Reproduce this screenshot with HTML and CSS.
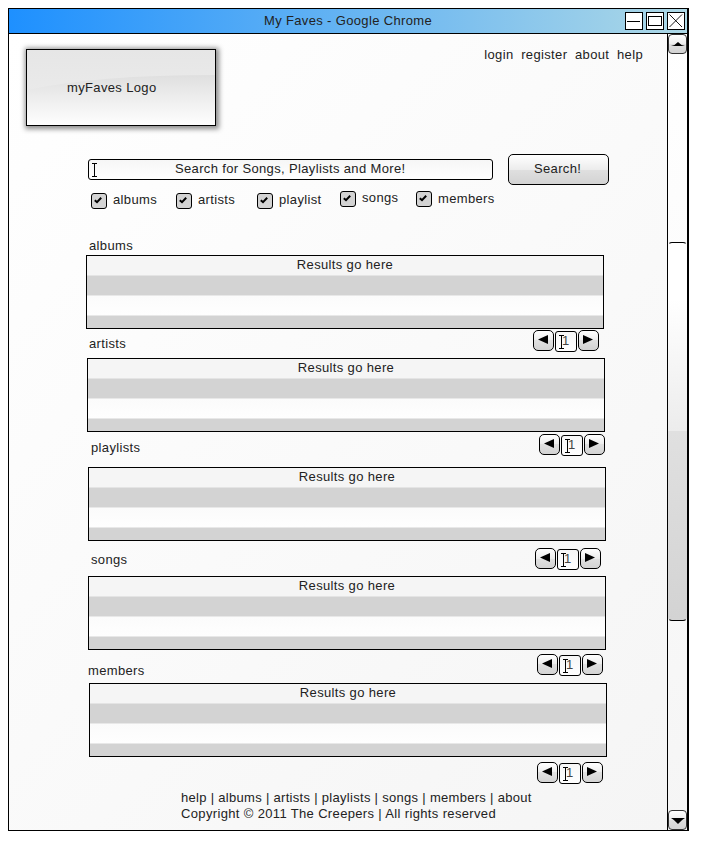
FILE: index.html
```html
<!DOCTYPE html>
<html lang="en">
<head>
<meta charset="utf-8">
<title>My Faves</title>
<link rel="stylesheet" href="styles.css">
</head>
<body>
<svg class="defs" width="0" height="0" aria-hidden="true">
  <symbol id="check" viewBox="0 0 8 7"><path d="M.8 3.2L3 5.2L7.2 .8" fill="none" stroke="#000" stroke-width="2"/></symbol>
  <symbol id="left" viewBox="0 0 10 9"><path d="M10 0V9L0 4.5Z"/></symbol>
  <symbol id="right" viewBox="0 0 10 9"><path d="M0 0V9L10 4.5Z"/></symbol>
  <symbol id="caret" viewBox="0 0 5 14"><path d="M0 .5H5M2.5 1V13M0 13.5H5" fill="none" stroke="#000"/></symbol>
</svg>
<div class="window">
  <header class="titlebar">
    <div class="title">My Faves - Google Chrome</div>
    <div class="controls">
      <svg width="18" height="18"><rect x=".5" y=".5" width="17" height="17" fill="#fff" stroke="#000"/><path d="M2 9.5H15" stroke="#000"/></svg>
      <svg width="18" height="18"><rect x=".5" y=".5" width="17" height="17" fill="#fff" stroke="#000"/><rect x="2.5" y="4.5" width="13" height="9" fill="none" stroke="#000"/></svg>
      <svg width="18" height="18"><rect x=".5" y=".5" width="17" height="17" fill="#fff" stroke="#000"/><path d="M2.5 2.5L15 15M15 2.5L2.5 15" stroke="#000" stroke-width=".9"/></svg>
    </div>
  </header>
  <div class="body">
    <main class="page">
      <div class="top">
        <div class="logo">
          <svg class="gloss" width="188" height="75" viewBox="0 0 188 75"><defs><linearGradient id="shade" x1="0" y1="0" x2="0" y2="1"><stop offset="0" stop-color="#dfdfdf"/><stop offset="1" stop-color="#fefefe"/></linearGradient></defs><path d="M0 40Q70 25 188 25V75H0Z" fill="url(#shade)"/></svg>
          <span>myFaves Logo</span>
        </div>
        <nav class="nav"><a>login</a><a>register</a><a>about</a><a>help</a></nav>
      </div>
      <div class="search">
        <div class="query"><svg class="caret" width="5" height="14"><use href="#caret"/></svg><span>Search for Songs, Playlists and More!</span></div>
        <div class="go">Search!</div>
      </div>
      <div class="filters">
        <div class="filter albums"><i><svg width="8" height="7"><use href="#check"/></svg></i><span>albums</span></div>
        <div class="filter artists"><i><svg width="8" height="7"><use href="#check"/></svg></i><span>artists</span></div>
        <div class="filter playlist"><i><svg width="8" height="7"><use href="#check"/></svg></i><span>playlist</span></div>
        <div class="filter songs"><i><svg width="8" height="7"><use href="#check"/></svg></i><span>songs</span></div>
        <div class="filter members"><i><svg width="8" height="7"><use href="#check"/></svg></i><span>members</span></div>
      </div>
      <div class="strip s0"><h2>albums</h2></div>
      <div class="results r1">Results go here</div>
      <div class="strip s1"><h2>artists</h2>
        <div class="pager"><b><svg width="10" height="9"><use href="#left"/></svg></b><div class="num"><svg width="5" height="14"><use href="#caret"/></svg><span>1</span></div><b><svg width="10" height="9"><use href="#right"/></svg></b></div></div>
      <div class="results r2">Results go here</div>
      <div class="strip s2"><h2>playlists</h2>
        <div class="pager"><b><svg width="10" height="9"><use href="#left"/></svg></b><div class="num"><svg width="5" height="14"><use href="#caret"/></svg><span>1</span></div><b><svg width="10" height="9"><use href="#right"/></svg></b></div></div>
      <div class="results r3">Results go here</div>
      <div class="strip s3"><h2>songs</h2>
        <div class="pager"><b><svg width="10" height="9"><use href="#left"/></svg></b><div class="num"><svg width="5" height="14"><use href="#caret"/></svg><span>1</span></div><b><svg width="10" height="9"><use href="#right"/></svg></b></div></div>
      <div class="results r3">Results go here</div>
      <div class="strip s4"><h2>members</h2>
        <div class="pager"><b><svg width="10" height="9"><use href="#left"/></svg></b><div class="num"><svg width="5" height="14"><use href="#caret"/></svg><span>1</span></div><b><svg width="10" height="9"><use href="#right"/></svg></b></div></div>
      <div class="results r5">Results go here</div>
      <div class="strip s5">
        <div class="pager"><b><svg width="10" height="9"><use href="#left"/></svg></b><div class="num"><svg width="5" height="14"><use href="#caret"/></svg><span>1</span></div><b><svg width="10" height="9"><use href="#right"/></svg></b></div></div>
      <footer><div class="links">help | albums | artists | playlists | songs | members | about</div><div>Copyright © 2011 The Creepers | All rights reserved</div></footer>
    </main>
    <aside class="scroll">
      <div class="arrow up"><svg width="14" height="4"><path d="M0 4Q4 3.5 7 0Q10 3.5 14 4Z"/></svg></div>
      <div class="thumb"></div>
      <div class="arrow down"><svg width="14" height="6"><path d="M0 0H14Q11 1.5 7 6Q3 1.5 0 0Z"/></svg></div>
    </aside>
  </div>
</div>
</body>
</html>
```

FILE: styles.css
```css
* { box-sizing: border-box; }
body {
  margin: 0;
  padding: 8px;
  background: #fff;
  font: 13px/16px "Liberation Sans", Arial, sans-serif;
  letter-spacing: .35px;
  color: #222;
}
svg { display: block; flex: none; }
.defs { position: absolute; }
.window {
  width: 681px;
  height: 823px;
  border: 1px solid #000;
  border-right-width: 2px;
  display: flex;
  flex-direction: column;
}
.titlebar {
  height: 25px;
  flex: none;
  border-bottom: 1px solid #000;
  background: linear-gradient(90deg, #1e90ff, #add8e6);
  display: flex;
  padding: 3px 2px 0 0;
}
.title { margin: 1px auto 0 255px; white-space: nowrap; }
.controls { display: flex; gap: 3px; }
.body { flex: 1; display: flex; min-height: 0; }
.page {
  flex: 1;
  min-width: 0;
  background: linear-gradient(135deg, #fff, #f5f5f5);
  display: flex;
  flex-direction: column;
}
.top { display: flex; height: 120px; padding: 15px 24px 0 17px; flex: none; }
.logo {
  position: relative;
  width: 190px;
  height: 77px;
  border: 1px solid #000;
  background: linear-gradient(#e6e6e6, #ededed);
  box-shadow: 1px 1px 5px 2px rgba(0, 0, 0, .45);
  padding: 30px 0 0 40px;
}
.gloss { position: absolute; left: 0; top: 0; }
.logo span { position: relative; }
.nav { margin-left: auto; display: flex; gap: 7.7px; margin-top: -2px; }
.search { display: flex; height: 31px; padding-left: 79px; flex: none; }
.query {
  width: 405px;
  height: 21px;
  margin: 5px 15px 0 0;
  border: 1px solid #000;
  border-radius: 3px;
  background: linear-gradient(#f6f6f6, #fff);
  display: flex;
  padding: 1px 0 0 3px;
}
.caret { margin-top: 2px; }
.query span { margin-left: 78px; white-space: nowrap; }
.go {
  width: 101px;
  height: 31px;
  border: 1px solid #000;
  border-radius: 5px;
  background: linear-gradient(#fff, #ececec 50%, #e0e0e0 50%, #d3d3d3);
  padding: 6px 0 0 25px;
}
.filters { display: flex; height: 53px; padding: 6px 0 0 82px; flex: none; }
.filter { display: flex; gap: 6px; width: 85px; }
.filter i {
  width: 16px;
  height: 16px;
  margin-top: 2px;
  border: 1px solid #000;
  border-radius: 3px;
  background: #d3d3d3;
  padding: 3px 0 0 2px;
}
.filter span { margin-top: 1px; }
.artists { width: 81px; }
.playlist { width: 83px; }
.songs { width: 76px; }
.songs i, .members i { margin-top: 0; }
.songs span { margin-top: -1px; }
.members span { margin-top: 0; }
.strip { display: flex; align-items: flex-start; flex: none; }
h2 { margin: 0; font: inherit; width: 100px; }
.s0 { height: 17px; padding-left: 80px; }
.s1 { height: 29px; padding-left: 80px; }
.s1 h2 { margin-top: 7px; }
.s1 .pager { margin: 1px 0 0 344px; }
.s2 { height: 35px; padding-left: 82px; }
.s2 h2 { margin-top: 8px; }
.s2 .pager { margin: 2px 0 0 348px; }
.s3 { height: 35px; padding-left: 82px; }
.s3 h2 { margin-top: 11px; }
.s3 .pager { margin: 7px 0 0 344px; }
.s4 { height: 33px; padding-left: 79px; }
.s4 h2 { margin-top: 13px; }
.s4 .pager { margin: 4px 0 0 349px; }
.s5 { height: 33px; }
.s5 .pager { margin: 5px 0 0 528px; }
.results {
  width: 518px;
  height: 74px;
  flex: none;
  border: 1px solid #000;
  background: linear-gradient(#f5f5f5 19px, #e4e4e4 19px 20px, #d3d3d3 20px 39px, #e8e8e8 39px 40px, #fbfbfb 40px, #fefefe 59px, #e8e8e8 59px 60px, #d3d3d3 60px);
  text-align: center;
  padding-top: 1px;
}
.r1 { margin-left: 77px; }
.r2 { margin-left: 78px; }
.r3 { margin-left: 79px; }
.r5 { margin-left: 80px; }
.pager { display: flex; gap: 1px; }
.pager b {
  width: 21px;
  height: 21px;
  border: 1px solid #000;
  border-radius: 5px;
  background: linear-gradient(#fff, #ececec 50%, #e0e0e0 50%, #d3d3d3);
  padding: 4px 0 0 4px;
}
.num {
  width: 22px;
  height: 21px;
  margin-top: 1px;
  border: 1px solid #000;
  border-radius: 3px;
  background: linear-gradient(#f6f6f6, #fff);
  display: flex;
  padding: 1px 0 0 3px;
  color: #444;
}
.num svg { margin-top: 2px; }
.num span { margin-left: -2px; }
footer { padding-left: 172px; line-height: 15px; white-space: nowrap; }
.links { letter-spacing: .3px; padding-bottom: 1px; }
.scroll {
  width: 20px;
  border-left: 1px solid #000;
  background: linear-gradient(#fff, #f5f5f5);
  display: flex;
  flex-direction: column;
}
.arrow {
  height: 20px;
  border: 1px solid #333;
  border-radius: 4px;
  background: linear-gradient(#fff, #ececec 50%, #dedede 50%, #d3d3d3);
  padding: 7px 0 0 2px;
}
.thumb {
  height: 379px;
  margin: 188px 0 189px;
  border: 1px solid #000;
  border-left-color: transparent;
  border-right-color: transparent;
  border-radius: 4px;
  background: linear-gradient(#fff, #fff 15%, #ececec 50%, #e0e0e0 50%, #d3d3d3);
}
```
